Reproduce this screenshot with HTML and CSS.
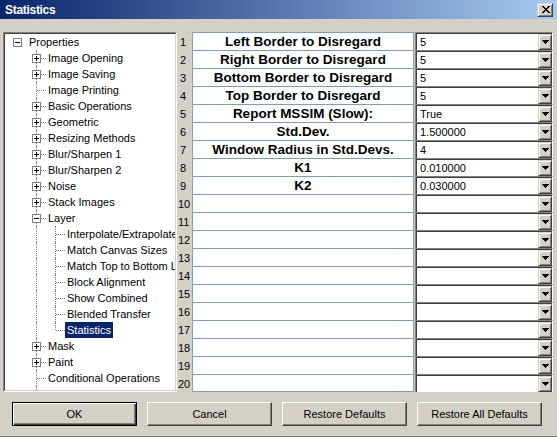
FILE: index.html
```html
<!DOCTYPE html>
<html>
<head>
<meta charset="utf-8">
<title>Statistics</title>
<link rel="stylesheet" href="styles.css">
</head>
<body>
<div class="window">
  <div class="titlebar">
    <span class="title">Statistics</span>
    <span class="close"><svg width="8" height="7" viewBox="0 0 8 7"><path d="M0 0h2v1H0zM6 0h2v1H6zM1 1h2v1H1zM5 1h2v1H5zM2 2h4v1H2zM3 3h2v1H3zM2 4h4v1H2zM1 5h2v1H1zM5 5h2v1H5zM0 6h2v1H0zM6 6h2v1H6z" fill="#000"/></svg></span>
  </div>
  <div class="main">
    <div class="tree">
      <div class="tree-inner">
        <div class="tr"><span class="g"><i class="box minus"></i></span><span class="lbl">Properties</span></div>
        <div class="tr"><span class="g"></span><span class="g tee"><i class="box plus"></i></span><span class="lbl">Image Opening</span></div>
        <div class="tr"><span class="g"></span><span class="g tee"><i class="box plus"></i></span><span class="lbl">Image Saving</span></div>
        <div class="tr"><span class="g"></span><span class="g tee"></span><span class="lbl">Image Printing</span></div>
        <div class="tr"><span class="g"></span><span class="g tee"><i class="box plus"></i></span><span class="lbl">Basic Operations</span></div>
        <div class="tr"><span class="g"></span><span class="g tee"><i class="box plus"></i></span><span class="lbl">Geometric</span></div>
        <div class="tr"><span class="g"></span><span class="g tee"><i class="box plus"></i></span><span class="lbl">Resizing Methods</span></div>
        <div class="tr"><span class="g"></span><span class="g tee"><i class="box plus"></i></span><span class="lbl">Blur/Sharpen 1</span></div>
        <div class="tr"><span class="g"></span><span class="g tee"><i class="box plus"></i></span><span class="lbl">Blur/Sharpen 2</span></div>
        <div class="tr"><span class="g"></span><span class="g tee"><i class="box plus"></i></span><span class="lbl">Noise</span></div>
        <div class="tr"><span class="g"></span><span class="g tee"><i class="box plus"></i></span><span class="lbl">Stack Images</span></div>
        <div class="tr"><span class="g"></span><span class="g tee"><i class="box minus"></i></span><span class="lbl">Layer</span></div>
        <div class="tr"><span class="g"></span><span class="g pipe"></span><span class="g tee"></span><span class="lbl">Interpolate/Extrapolate</span></div>
        <div class="tr"><span class="g"></span><span class="g pipe"></span><span class="g tee"></span><span class="lbl">Match Canvas Sizes</span></div>
        <div class="tr"><span class="g"></span><span class="g pipe"></span><span class="g tee"></span><span class="lbl">Match Top to Bottom Layers</span></div>
        <div class="tr"><span class="g"></span><span class="g pipe"></span><span class="g tee"></span><span class="lbl">Block Alignment</span></div>
        <div class="tr"><span class="g"></span><span class="g pipe"></span><span class="g tee"></span><span class="lbl">Show Combined</span></div>
        <div class="tr"><span class="g"></span><span class="g pipe"></span><span class="g tee"></span><span class="lbl">Blended Transfer</span></div>
        <div class="tr"><span class="g"></span><span class="g pipe"></span><span class="g elbow"></span><span class="lbl sel">Statistics</span></div>
        <div class="tr"><span class="g"></span><span class="g tee"><i class="box plus"></i></span><span class="lbl">Mask</span></div>
        <div class="tr"><span class="g"></span><span class="g tee"><i class="box plus"></i></span><span class="lbl">Paint</span></div>
        <div class="tr"><span class="g"></span><span class="g tee"></span><span class="lbl">Conditional Operations</span></div>
        <div class="tr"><span class="g"></span><span class="g tee"><i class="box plus"></i></span><span class="lbl">View</span></div>
      </div>
    </div>
    <div class="grid">
      <div class="gr"><span class="rn">1</span><span class="nm">Left Border to Disregard</span><span class="val"><span class="vt">5</span><span class="dd"><svg width="7" height="4" viewBox="0 0 7 4"><path d="M0 0h7v1H0zM1 1h5v1H1zM2 2h3v1H2zM3 3h1v1H3z" fill="#000"/></svg></span></span></div>
      <div class="gr"><span class="rn">2</span><span class="nm">Right Border to Disregard</span><span class="val"><span class="vt">5</span><span class="dd"><svg width="7" height="4" viewBox="0 0 7 4"><path d="M0 0h7v1H0zM1 1h5v1H1zM2 2h3v1H2zM3 3h1v1H3z" fill="#000"/></svg></span></span></div>
      <div class="gr"><span class="rn">3</span><span class="nm">Bottom Border to Disregard</span><span class="val"><span class="vt">5</span><span class="dd"><svg width="7" height="4" viewBox="0 0 7 4"><path d="M0 0h7v1H0zM1 1h5v1H1zM2 2h3v1H2zM3 3h1v1H3z" fill="#000"/></svg></span></span></div>
      <div class="gr"><span class="rn">4</span><span class="nm">Top Border to Disregard</span><span class="val"><span class="vt">5</span><span class="dd"><svg width="7" height="4" viewBox="0 0 7 4"><path d="M0 0h7v1H0zM1 1h5v1H1zM2 2h3v1H2zM3 3h1v1H3z" fill="#000"/></svg></span></span></div>
      <div class="gr"><span class="rn">5</span><span class="nm">Report MSSIM (Slow):</span><span class="val"><span class="vt">True</span><span class="dd"><svg width="7" height="4" viewBox="0 0 7 4"><path d="M0 0h7v1H0zM1 1h5v1H1zM2 2h3v1H2zM3 3h1v1H3z" fill="#000"/></svg></span></span></div>
      <div class="gr"><span class="rn">6</span><span class="nm">Std.Dev.</span><span class="val"><span class="vt">1.500000</span><span class="dd"><svg width="7" height="4" viewBox="0 0 7 4"><path d="M0 0h7v1H0zM1 1h5v1H1zM2 2h3v1H2zM3 3h1v1H3z" fill="#000"/></svg></span></span></div>
      <div class="gr"><span class="rn">7</span><span class="nm">Window Radius in Std.Devs.</span><span class="val"><span class="vt">4</span><span class="dd"><svg width="7" height="4" viewBox="0 0 7 4"><path d="M0 0h7v1H0zM1 1h5v1H1zM2 2h3v1H2zM3 3h1v1H3z" fill="#000"/></svg></span></span></div>
      <div class="gr"><span class="rn">8</span><span class="nm">K1</span><span class="val"><span class="vt">0.010000</span><span class="dd"><svg width="7" height="4" viewBox="0 0 7 4"><path d="M0 0h7v1H0zM1 1h5v1H1zM2 2h3v1H2zM3 3h1v1H3z" fill="#000"/></svg></span></span></div>
      <div class="gr"><span class="rn">9</span><span class="nm">K2</span><span class="val"><span class="vt">0.030000</span><span class="dd"><svg width="7" height="4" viewBox="0 0 7 4"><path d="M0 0h7v1H0zM1 1h5v1H1zM2 2h3v1H2zM3 3h1v1H3z" fill="#000"/></svg></span></span></div>
      <div class="gr"><span class="rn">10</span><span class="nm"></span><span class="val"><span class="vt"></span><span class="dd"><svg width="7" height="4" viewBox="0 0 7 4"><path d="M0 0h7v1H0zM1 1h5v1H1zM2 2h3v1H2zM3 3h1v1H3z" fill="#000"/></svg></span></span></div>
      <div class="gr"><span class="rn">11</span><span class="nm"></span><span class="val"><span class="vt"></span><span class="dd"><svg width="7" height="4" viewBox="0 0 7 4"><path d="M0 0h7v1H0zM1 1h5v1H1zM2 2h3v1H2zM3 3h1v1H3z" fill="#000"/></svg></span></span></div>
      <div class="gr"><span class="rn">12</span><span class="nm"></span><span class="val"><span class="vt"></span><span class="dd"><svg width="7" height="4" viewBox="0 0 7 4"><path d="M0 0h7v1H0zM1 1h5v1H1zM2 2h3v1H2zM3 3h1v1H3z" fill="#000"/></svg></span></span></div>
      <div class="gr"><span class="rn">13</span><span class="nm"></span><span class="val"><span class="vt"></span><span class="dd"><svg width="7" height="4" viewBox="0 0 7 4"><path d="M0 0h7v1H0zM1 1h5v1H1zM2 2h3v1H2zM3 3h1v1H3z" fill="#000"/></svg></span></span></div>
      <div class="gr"><span class="rn">14</span><span class="nm"></span><span class="val"><span class="vt"></span><span class="dd"><svg width="7" height="4" viewBox="0 0 7 4"><path d="M0 0h7v1H0zM1 1h5v1H1zM2 2h3v1H2zM3 3h1v1H3z" fill="#000"/></svg></span></span></div>
      <div class="gr"><span class="rn">15</span><span class="nm"></span><span class="val"><span class="vt"></span><span class="dd"><svg width="7" height="4" viewBox="0 0 7 4"><path d="M0 0h7v1H0zM1 1h5v1H1zM2 2h3v1H2zM3 3h1v1H3z" fill="#000"/></svg></span></span></div>
      <div class="gr"><span class="rn">16</span><span class="nm"></span><span class="val"><span class="vt"></span><span class="dd"><svg width="7" height="4" viewBox="0 0 7 4"><path d="M0 0h7v1H0zM1 1h5v1H1zM2 2h3v1H2zM3 3h1v1H3z" fill="#000"/></svg></span></span></div>
      <div class="gr"><span class="rn">17</span><span class="nm"></span><span class="val"><span class="vt"></span><span class="dd"><svg width="7" height="4" viewBox="0 0 7 4"><path d="M0 0h7v1H0zM1 1h5v1H1zM2 2h3v1H2zM3 3h1v1H3z" fill="#000"/></svg></span></span></div>
      <div class="gr"><span class="rn">18</span><span class="nm"></span><span class="val"><span class="vt"></span><span class="dd"><svg width="7" height="4" viewBox="0 0 7 4"><path d="M0 0h7v1H0zM1 1h5v1H1zM2 2h3v1H2zM3 3h1v1H3z" fill="#000"/></svg></span></span></div>
      <div class="gr"><span class="rn">19</span><span class="nm"></span><span class="val"><span class="vt"></span><span class="dd"><svg width="7" height="4" viewBox="0 0 7 4"><path d="M0 0h7v1H0zM1 1h5v1H1zM2 2h3v1H2zM3 3h1v1H3z" fill="#000"/></svg></span></span></div>
      <div class="gr last"><span class="rn">20</span><span class="nm"></span><span class="val"><span class="vt"></span><span class="dd"><svg width="7" height="4" viewBox="0 0 7 4"><path d="M0 0h7v1H0zM1 1h5v1H1zM2 2h3v1H2zM3 3h1v1H3z" fill="#000"/></svg></span></span></div>
    </div>
  </div>
  <div class="buttons">
    <span class="btn default"><span class="btn-face">OK</span></span>
    <span class="btn"><span class="btn-face">Cancel</span></span>
    <span class="btn"><span class="btn-face">Restore Defaults</span></span>
    <span class="btn"><span class="btn-face">Restore All Defaults</span></span>
  </div>
</div>
</body>
</html>
```

FILE: styles.css
```css
* { box-sizing: border-box; }
html, body { margin: 0; padding: 0; }
body {
  font-family: "Liberation Sans", Arial, sans-serif;
  font-size: 11px;
  color: #000;
  background: #d4d0c8;
}
.window {
  width: 557px;
  height: 437px;
  background: #d4d0c8;
  border-bottom: 1px solid #808080;
  overflow: hidden;
}
.titlebar {
  height: 19px;
  background: linear-gradient(to right, #0a246a, #a6caf0);
  display: flex;
  align-items: center;
  justify-content: space-between;
  padding: 0 4px 0 5px;
}
.title {
  color: #fff;
  font-weight: bold;
  font-size: 12px;
  letter-spacing: -0.3px;
}
.close {
  width: 16px;
  height: 14px;
  background: #d4d0c8;
  border: 1px solid;
  border-color: #d4d0c8 #404040 #404040 #d4d0c8;
  box-shadow: inset 1px 1px 0 #fff, inset -1px -1px 0 #808080;
  display: flex;
  align-items: center;
  justify-content: center;
  padding-left: 1px;
}
.close svg { display: block; }
.main {
  display: flex;
  margin-top: 13px;
  padding-left: 3px;
}
.tree {
  width: 174px;
  height: 360px;
  border: 1px solid;
  border-color: #808080 #fff #fff #808080;
  flex: none;
}
.tree-inner {
  height: 100%;
  border: 1px solid;
  border-color: #404040 #d4d0c8 #d4d0c8 #404040;
  background: #fff;
  overflow: hidden;
  padding-left: 3px;
}
.tr {
  display: flex;
  height: 16px;
  white-space: nowrap;
}
.g {
  width: 19px;
  height: 16px;
  flex: none;
  position: relative;
}
.g.pipe::before, .g.tee::before, .g.elbow::before {
  content: "";
  position: absolute;
  left: 9px;
  top: 0;
  bottom: 0;
  border-left: 1px dotted #808080;
}
.g.elbow::before { bottom: 8px; }
.g.tee::after, .g.elbow::after {
  content: "";
  position: absolute;
  left: 10px;
  right: 0;
  top: 8px;
  border-top: 1px dotted #808080;
}
.box {
  position: absolute;
  left: 5px;
  top: 4px;
  width: 9px;
  height: 9px;
  border: 1px solid #808080;
  background: #fff;
  z-index: 1;
}
.box::before {
  content: "";
  position: absolute;
  left: 1px;
  top: 3px;
  width: 5px;
  height: 1px;
  background: #000;
}
.box.plus::after {
  content: "";
  position: absolute;
  left: 3px;
  top: 1px;
  width: 1px;
  height: 5px;
  background: #000;
}
.lbl {
  line-height: 16px;
  padding: 0 2px;
  flex: none;
}
.lbl.sel {
  background: #0a246a;
  color: #fff;
}
.grid {
  display: flex;
  flex-direction: column;
  flex: none;
}
.gr {
  display: flex;
  height: 18px;
}
.rn {
  width: 15px;
  padding: 4px 0 0 3px;
  line-height: 13px;
  flex: none;
  overflow: hidden;
}
.gr:nth-child(n+10) .rn { padding-left: 1px; }
.nm {
  width: 222px;
  flex: none;
  background: #fff;
  border: 1px solid #7f9db9;
  border-bottom: none;
  text-align: center;
  font-weight: bold;
  font-size: 13.5px;
  line-height: 17px;
  white-space: nowrap;
  overflow: hidden;
}
.gr.last .nm { border-bottom: 1px solid #7f9db9; }
.val {
  width: 138px;
  flex: none;
  margin-left: 1px;
  display: flex;
  background: #fff;
  border-top: 1px solid #808080;
  border-left: 1px solid #808080;
  border-right: 1px solid #fff;
  box-shadow: inset 1px 1px 0 #404040;
  padding: 1px 0 0 1px;
}
.vt {
  flex: 1;
  padding: 1px 0 0 3px;
  line-height: 14px;
}
.dd {
  width: 14px;
  flex: none;
  background: #d4d0c8;
  border: 1px solid;
  border-color: #d4d0c8 #404040 #404040 #d4d0c8;
  box-shadow: inset 1px 1px 0 #fff, inset -1px -1px 0 #808080;
  display: flex;
  align-items: center;
  justify-content: center;
}
.dd svg { display: block; }
.buttons {
  display: flex;
  gap: 10px;
  margin-top: 10px;
  padding-left: 12px;
}
.btn {
  width: 125px;
  height: 24px;
  display: flex;
  border: 1px solid;
  border-color: #fff #404040 #404040 #fff;
}
.btn-face {
  flex: 1;
  display: flex;
  align-items: center;
  justify-content: center;
  box-shadow: inset -1px -1px 0 #808080;
}
.btn.default {
  border-color: #000;
}
.btn.default .btn-face {
  box-shadow: inset 1px 1px 0 #fff, inset -1px -1px 0 #404040, inset -2px -2px 0 #808080;
}
```
